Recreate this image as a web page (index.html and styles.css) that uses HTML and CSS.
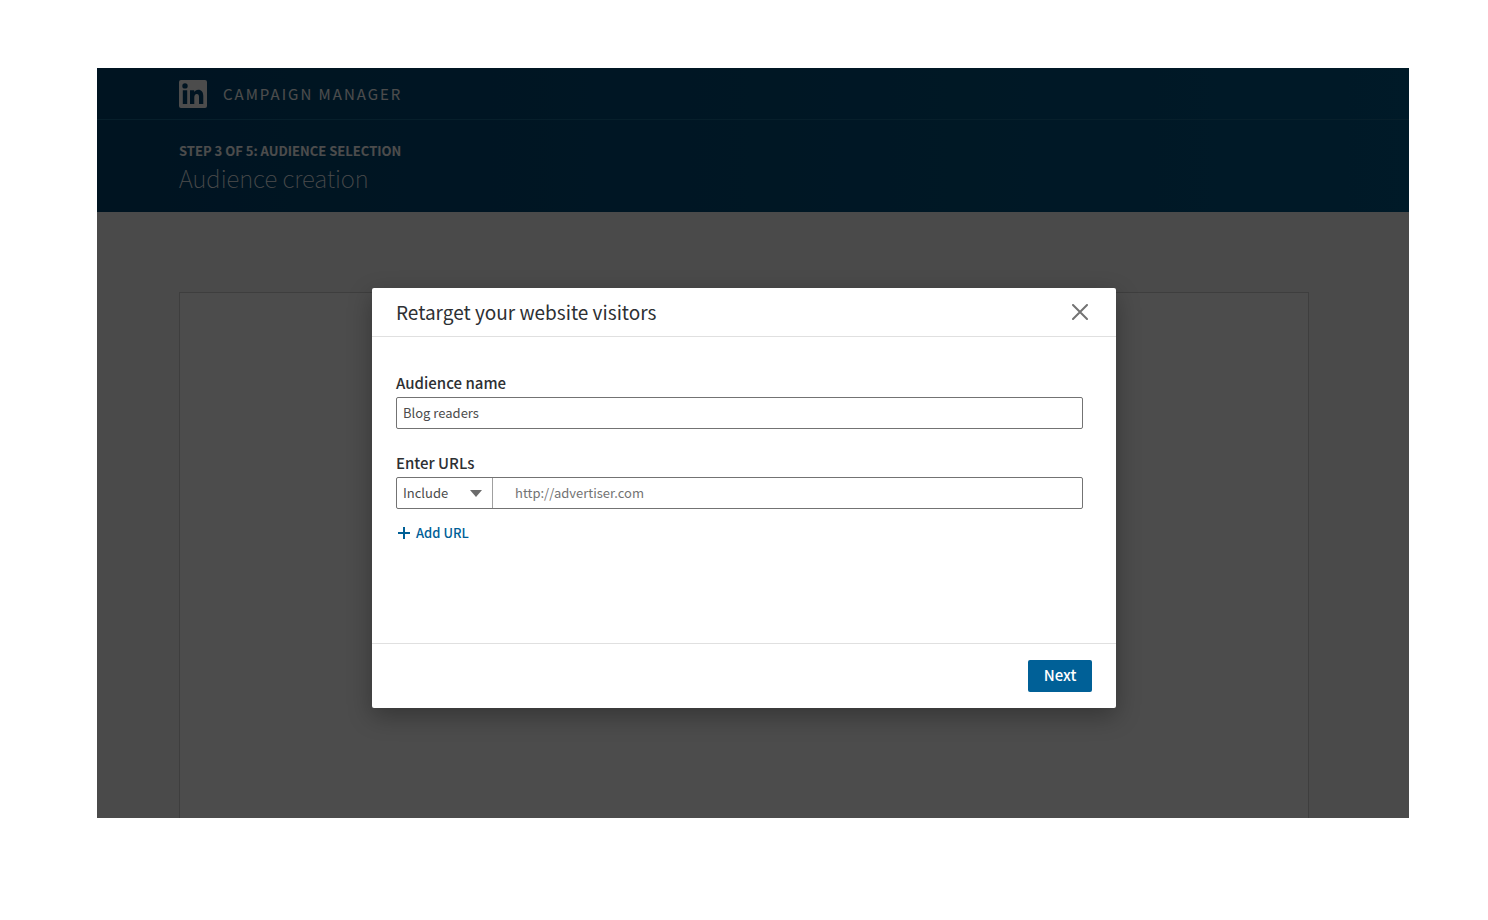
FILE: index.html
```html
<!DOCTYPE html>
<html lang="en">
<head>
<meta charset="utf-8">
<meta name="viewport" content="width=device-width, initial-scale=1">
<title>Campaign Manager</title>
<link rel="stylesheet" href="styles.css">
</head>
<body>
<div class="app">
  <header class="masthead">
    <div class="topbar">
      <svg class="logo" viewBox="0 0 28 28" aria-hidden="true">
        <path fill="#fff" fill-rule="evenodd" d="M2 0h24a2 2 0 0 1 2 2v24a2 2 0 0 1-2 2H2a2 2 0 0 1-2-2V2a2 2 0 0 1 2-2zM3.800 10.200v13.800h4.400V10.200zM6 3.200a2.700 2.700 0 1 0 0 5.400 2.700 2.700 0 0 0 0-5.400zM11 10.200v13.800h4.300v-6.900c0-1.900.8-3.200 2.500-3.200 1.600 0 2.200 1.200 2.200 3.100V24h4.300v-7.900c0-4-1.800-6.300-5-6.300-2 0-3.400 1.100-4.100 2.300v-1.900z"/>
      </svg>
      <span class="brand">CAMPAIGN MANAGER</span>
    </div>
    <div class="heading">
      <p class="step">STEP 3 OF 5: AUDIENCE SELECTION</p>
      <h1 class="title">Audience creation</h1>
    </div>
  </header>
  <main class="content"><div class="card"></div></main>

  <div class="overlay">
    <section class="dialog" role="dialog" aria-modal="true" aria-labelledby="dialog-title">
      <header class="dialog-header">
        <h2 class="dialog-title" id="dialog-title">Retarget your website visitors</h2>
        <button class="close" type="button" aria-label="Close">
          <svg viewBox="0 0 16 16" width="16" height="16"><path d="M1 1l14 14M15 1L1 15" fill="none" stroke="#737373" stroke-width="2" stroke-linecap="round"/></svg>
        </button>
      </header>
      <form class="dialog-body">
        <div class="field">
          <label class="label" for="name">Audience name</label>
          <input class="box" id="name" type="text" value="Blog readers">
        </div>
        <div class="field">
          <label class="label" for="url">Enter URLs</label>
          <div class="box group">
            <div class="select-wrap">
              <select class="select" aria-label="URL rule"><option>Include</option><option>Exclude</option></select>
              <svg class="caret" viewBox="0 0 12 8" width="12" height="8"><path d="M0 1h12L6 8z" fill="#6b6b6b"/></svg>
            </div>
            <input class="url" id="url" type="text" placeholder="http://advertiser.com">
          </div>
        </div>
        <button class="add" type="button">
          <svg viewBox="0 0 12 12" width="12" height="12"><path d="M6 0v12M0 6h12" stroke="#006097" stroke-width="2"/></svg>
          Add URL
        </button>
      </form>
      <footer class="dialog-footer"><button class="next" type="button">Next</button></footer>
    </section>
  </div>
</div>
</body>
</html>
```
FILE: styles.css
```css
* { box-sizing: border-box; }
body {
  margin: 0;
  min-height: 100vh;
  display: flex;
  padding: 68px 79px 102px 97px;
  background: #fff;
  color: #2d3033;
  font-family: "Noto Sans CJK SC", "Open Sans", sans-serif;
}
button, input, select { font-family: inherit; }
h1, h2, p { margin: 0; }
.app {
  position: relative;
  flex: 1;
  display: flex;
  flex-direction: column;
  background: #f7f7f7;
}
.masthead {
  background: linear-gradient(90deg, #004370, #005785);
  color: #fff;
}
.topbar {
  display: flex;
  align-items: center;
  gap: 16px;
  height: 52px;
  padding: 0 82px;
  border-bottom: 1px solid #1a6a90;
}
.logo { width: 28px; height: 28px; }
.brand { font-size: 15px; line-height: 24px; letter-spacing: 2px; font-weight: 400; }
.heading { height: 92px; padding: 20px 82px 0; }
.step { font-size: 13px; line-height: 22px; font-weight: 700; }
.title { font-size: 24px; line-height: 32px; font-weight: 100; }
.content { flex: 1; display: flex; padding: 80px 100px 0 82px; }
.card {
  flex: 1;
  background: #fff;
  border: 1px solid #d0d0d0;
  border-bottom: 0;
}
.overlay {
  position: absolute;
  inset: 0;
  display: flex;
  align-items: flex-start;
  justify-content: center;
  padding: 220px 18px 0 0;
  background: rgba(0, 0, 0, 0.7);
}
.dialog {
  width: 744px;
  max-width: 100%;
  background: #fff;
  border-radius: 2px;
  box-shadow: 0 8px 24px rgba(0, 0, 0, 0.3);
}
.dialog-header {
  display: flex;
  align-items: center;
  justify-content: space-between;
  height: 49px;
  padding: 0 24px;
  border-bottom: 1px solid #e0e0e0;
}
.dialog-title { font-size: 19px; line-height: 28px; font-weight: 400; }
.close {
  display: flex;
  padding: 4px;
  border: 0;
  background: none;
}
.dialog-body { min-height: 306px; padding: 34px 33px 0 24px; }
.field { margin-bottom: 22px; }
.field:last-of-type { margin-bottom: 14px; }
.label { display: block; height: 26px; font-size: 15px; line-height: 24px; font-weight: 500; }
.box {
  display: flex;
  width: 100%;
  height: 32px;
  border: 1px solid #737373;
  border-radius: 2px;
  background: #fff;
}
.dialog-body input, .select { font-size: 13px; color: #4c4c4c; outline: 0; }
.dialog-body input.box { padding: 0 6px 2px; }
.select-wrap { position: relative; width: 96px; border-right: 1px solid #a0a0a0; }
.select {
  width: 100%;
  height: 100%;
  padding: 0 24px 2px 6px;
  border: 0;
  background: none;
  appearance: none;
}
.caret { position: absolute; right: 10px; top: 11px; pointer-events: none; }
.dialog-body .url { flex: 1; min-width: 0; padding: 0 22px 2px; border: 0; background: none; }
.url::placeholder { color: #737373; }
.add {
  display: flex;
  align-items: center;
  gap: 6px;
  padding: 0 2px;
  border: 0;
  background: none;
  color: #006097;
  font-size: 13px;
  line-height: 20px;
  font-weight: 500;
}
.dialog-footer {
  display: flex;
  justify-content: flex-end;
  padding: 16px 24px;
  border-top: 1px solid #e0e0e0;
}
.next {
  width: 64px;
  height: 32px;
  padding: 0 0 2px;
  border: 0;
  border-radius: 2px;
  background: #006097;
  color: #fff;
  font-size: 15px;
  line-height: 24px;
  font-weight: 500;
}
```
